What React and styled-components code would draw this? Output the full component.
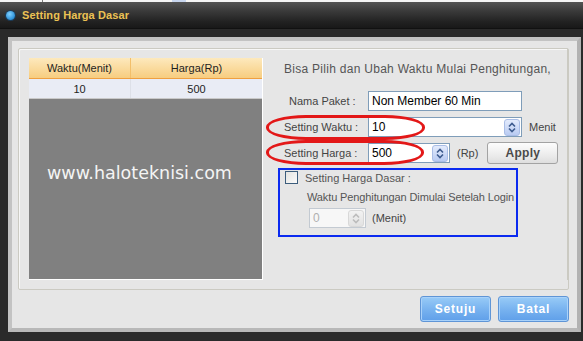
import React from 'react';
import styled, { createGlobalStyle } from 'styled-components';

const GlobalStyle = createGlobalStyle`
  html, body {
    margin: 0;
    padding: 0;
    background: #2a2a2a;
  }
  body {
    font-family: "Liberation Sans", Arial, sans-serif;
  }
`;

const Window = styled.div`
  width: 583px;
  height: 341px;
  display: flex;
  flex-direction: column;
  background: #2a2a2a;
  overflow: hidden;
`;

const TopStrip = styled.div`
  height: 2px;
  background: linear-gradient(90deg, #f6f6f6 0, #f6f6f6 42px, #7a7a7a 42px, #7a7a7a 43px, #f6f6f6 43px, #f6f6f6 172px, #c8d6ef 172px, #c8d6ef 186px, #f6f6f6 186px);
`;

const TitleBar = styled.div`
  height: 26px;
  display: flex;
  align-items: center;
  gap: 7px;
  padding-left: 6px;
  background: linear-gradient(#555 0%, #3a3a3a 35%, #222 75%, #181818 100%);
  border-bottom: 1px solid #111;
`;

const Dot = styled.span`
  width: 9px;
  height: 9px;
  border-radius: 50%;
  background: radial-gradient(circle at 40% 35%, #7fd0ff, #2a8fd8 70%);
  box-shadow: 0 0 0 1px #1b3c5a;
`;

const Title = styled.span`
  color: #ecc254;
  font-weight: bold;
  font-size: 11px;
  letter-spacing: 0.1px;
`;

const Body = styled.div`
  flex: 1;
  padding: 8px 3px 9px 8px;
  display: flex;
`;

const Frame = styled.div`
  flex: 1;
  display: flex;
  flex-direction: column;
  background: #e6e6e6;
  border: 4px solid #c3c3c3;
  border-right-color: #b2b2b2;
  border-bottom-color: #b8b8b8;
  padding: 7px 8px 6px 6px;
`;

const GroupBox = styled.div`
  height: 242px;
  box-sizing: border-box;
  display: flex;
  border: 1px solid #cbcac2;
  border-radius: 2px;
  box-shadow: inset 1px 1px 0 #f7f7f7;
  padding: 9px 0 9px 10px;
`;

const Table = styled.div`
  width: 234px;
  display: flex;
  flex-direction: column;
  background: #808080;
  border-right: 1px solid #fff;
  border-bottom: 1px solid #fff;
  box-sizing: border-box;
`;

const HeadRow = styled.div`
  height: 21px;
  display: flex;
  background: linear-gradient(#fde9bd, #f7cd80);
  border-bottom: 1px solid #f0a040;
  box-sizing: border-box;
`;

const DataRow = styled.div`
  height: 20px;
  display: flex;
  background: #e9ecf5;
  border-bottom: 1px solid #c9c9c9;
  box-sizing: border-box;
`;

const Cell = styled.div`
  width: ${p => p.$w}px;
  display: flex;
  align-items: center;
  justify-content: center;
  font-size: 11px;
  color: #1e1e1e;
  border-right: 1px solid ${p => (p.$head ? '#f3bf6a' : '#dde0e8')};
  &:last-child {
    flex: 1;
    border-right: none;
  }
`;

const Watermark = styled.div`
  margin: 63px 0 0 18px;
  color: #f4f4f4;
  font-family: "DejaVu Sans", Verdana, sans-serif;
  font-size: 17.5px;
  line-height: 22px;
`;

const Panel = styled.div`
  margin-left: 21px;
  display: flex;
  flex-direction: column;
  width: 283px;
  border-right: 1px solid #cbcac2;
  margin-top: -9px;
  padding-top: 9px;
`;

const Intro = styled.div`
  margin-top: 3px;
  height: 16px;
  line-height: 16px;
  font-size: 12px;
  letter-spacing: 0.28px;
  color: #555;
  white-space: nowrap;
`;

const Rows = styled.div`
  margin-top: 14px;
  display: flex;
  flex-direction: column;
  gap: 6px;
`;

const Row = styled.div`
  position: relative;
  height: 20px;
  display: flex;
  align-items: center;
`;

const Label = styled.span`
  width: ${p => 84 - p.$indent}px;
  padding-left: ${p => p.$indent}px;
  font-size: 11px;
  color: #444;
  white-space: nowrap;
`;

const Field = styled.div`
  position: relative;
  width: ${p => p.$w}px;
  height: 20px;
  box-sizing: border-box;
  border: 1px solid ${p => (p.$disabled ? '#c3cad2' : '#7f9db9')};
  background: ${p => (p.$disabled ? '#f7f7f7' : '#fff')};
  display: flex;
  align-items: center;
  padding-left: 3px;
  font-size: 12px;
  color: ${p => (p.$disabled ? '#b0b0b0' : '#000')};
`;

const FieldText = styled.span`
  flex: 1;
`;

const SpinBox = styled.div`
  width: 14px;
  height: 15px;
  margin-right: 1px;
  border-radius: 3px;
  border: 1px solid ${p => (p.$disabled ? '#d8d8d8' : '#a9bde6')};
  background: ${p => (p.$disabled ? 'linear-gradient(#f2f2f2, #e2e2e2)' : 'linear-gradient(#e3ebfc, #b9cbf2)')};
  display: flex;
  align-items: center;
  justify-content: center;
`;

const Unit = styled.span`
  margin-left: ${p => p.$gap}px;
  font-size: 11px;
  color: #444;
`;

const ApplyButton = styled.button`
  margin-left: 9px;
  width: 71px;
  height: 22px;
  border: 1px solid #a3a3a3;
  border-radius: 3px;
  background: linear-gradient(#fdfdfd, #ececec 60%, #dedede);
  font-family: "Liberation Sans", Arial, sans-serif;
  font-weight: bold;
  font-size: 12px;
  color: #4a4a4a;
  padding: 0;
  letter-spacing: 0.3px;
`;

const Annotation = styled.div`
  position: absolute;
  left: -18px;
  top: ${p => p.$top}px;
  width: ${p => p.$w}px;
  height: 25px;
  box-sizing: border-box;
  border: 3px solid #e31818;
  border-radius: 40px / 12px;
  pointer-events: none;
`;

const BlueBox = styled.div`
  margin: 5px 0 0 -6px;
  width: 240px;
  height: 69px;
  box-sizing: border-box;
  border: 2px solid #0a2af0;
  padding: 1px 0 0 5px;
  display: flex;
  flex-direction: column;
`;

const CheckRow = styled.div`
  display: flex;
  align-items: center;
  gap: 7px;
  height: 13px;
  font-size: 11px;
  color: #555;
`;

const Checkbox = styled.span`
  width: 13px;
  height: 13px;
  box-sizing: border-box;
  border: 1px solid #3c5d7c;
  background: linear-gradient(135deg, #e4e4e0, #fafafa);
`;

const Note = styled.div`
  margin: 6px 0 0 22px;
  height: 14px;
  line-height: 14px;
  font-size: 11px;
  letter-spacing: -0.12px;
  color: #555;
  white-space: nowrap;
`;

const MinuteRow = styled.div`
  margin: 4px 0 0 24px;
  display: flex;
  align-items: center;
`;

const Footer = styled.div`
  margin-top: 6px;
  display: flex;
  justify-content: flex-end;
  gap: 7px;
`;

const BlueButton = styled.button`
  width: 71px;
  height: 26px;
  border: 1px solid #5f95d6;
  border-radius: 3px;
  box-shadow: inset 0 0 0 1px #a9d2fa;
  background: linear-gradient(#98cbf7, #76b1ef 55%, #5f9fe9);
  color: #fff;
  font-family: "Liberation Sans", Arial, sans-serif;
  font-weight: bold;
  font-size: 12px;
  letter-spacing: 0.8px;
  padding: 0;
`;

function Spin({ disabled }) {
  const c = disabled ? '#bcbcbc' : '#3d5b8e';
  return (
    <SpinBox $disabled={disabled}>
      <svg width="8" height="11" viewBox="0 0 8 11">
        <path d="M1 4.5 L4 1.5 L7 4.5" fill="none" stroke={c} strokeWidth="1.6" />
        <path d="M1 6.5 L4 9.5 L7 6.5" fill="none" stroke={c} strokeWidth="1.6" />
      </svg>
    </SpinBox>
  );
}

export default function App() {
  return (
    <Window>
      <GlobalStyle />
      <TopStrip />
      <TitleBar>
        <Dot />
        <Title>Setting Harga Dasar</Title>
      </TitleBar>
      <Body>
        <Frame>
          <GroupBox>
            <Table>
              <HeadRow>
                <Cell $w={101} $head>Waktu(Menit)</Cell>
                <Cell $head>Harga(Rp)</Cell>
              </HeadRow>
              <DataRow>
                <Cell $w={101}>10</Cell>
                <Cell>500</Cell>
              </DataRow>
              <Watermark>www.haloteknisi.com</Watermark>
            </Table>
            <Panel>
              <Intro>Bisa Pilih dan Ubah Waktu Mulai Penghitungan,</Intro>
              <Rows>
                <Row>
                  <Label $indent={5}>Nama Paket :</Label>
                  <Field $w={154}><FieldText>Non Member 60 Min</FieldText></Field>
                </Row>
                <Row>
                  <Label $indent={0}>Setting Waktu :</Label>
                  <Field $w={154}><FieldText>10</FieldText><Spin /></Field>
                  <Unit $gap={7}>Menit</Unit>
                  <Annotation $top={-2} $w={159} />
                </Row>
                <Row>
                  <Label $indent={0}>Setting Harga :</Label>
                  <Field $w={82}><FieldText>500</FieldText><Spin /></Field>
                  <Unit $gap={7}>(Rp)</Unit>
                  <ApplyButton>Apply</ApplyButton>
                  <Annotation $top={-3} $w={158} />
                </Row>
              </Rows>
              <BlueBox>
                <CheckRow>
                  <Checkbox />
                  <span>Setting Harga Dasar :</span>
                </CheckRow>
                <Note>Waktu Penghitungan Dimulai Setelah Login</Note>
                <MinuteRow>
                  <Field $w={57} $disabled><FieldText>0</FieldText><Spin disabled /></Field>
                  <Unit $gap={6}>(Menit)</Unit>
                </MinuteRow>
              </BlueBox>
            </Panel>
          </GroupBox>
          <Footer>
            <BlueButton>Setuju</BlueButton>
            <BlueButton>Batal</BlueButton>
          </Footer>
        </Frame>
      </Body>
    </Window>
  );
}
